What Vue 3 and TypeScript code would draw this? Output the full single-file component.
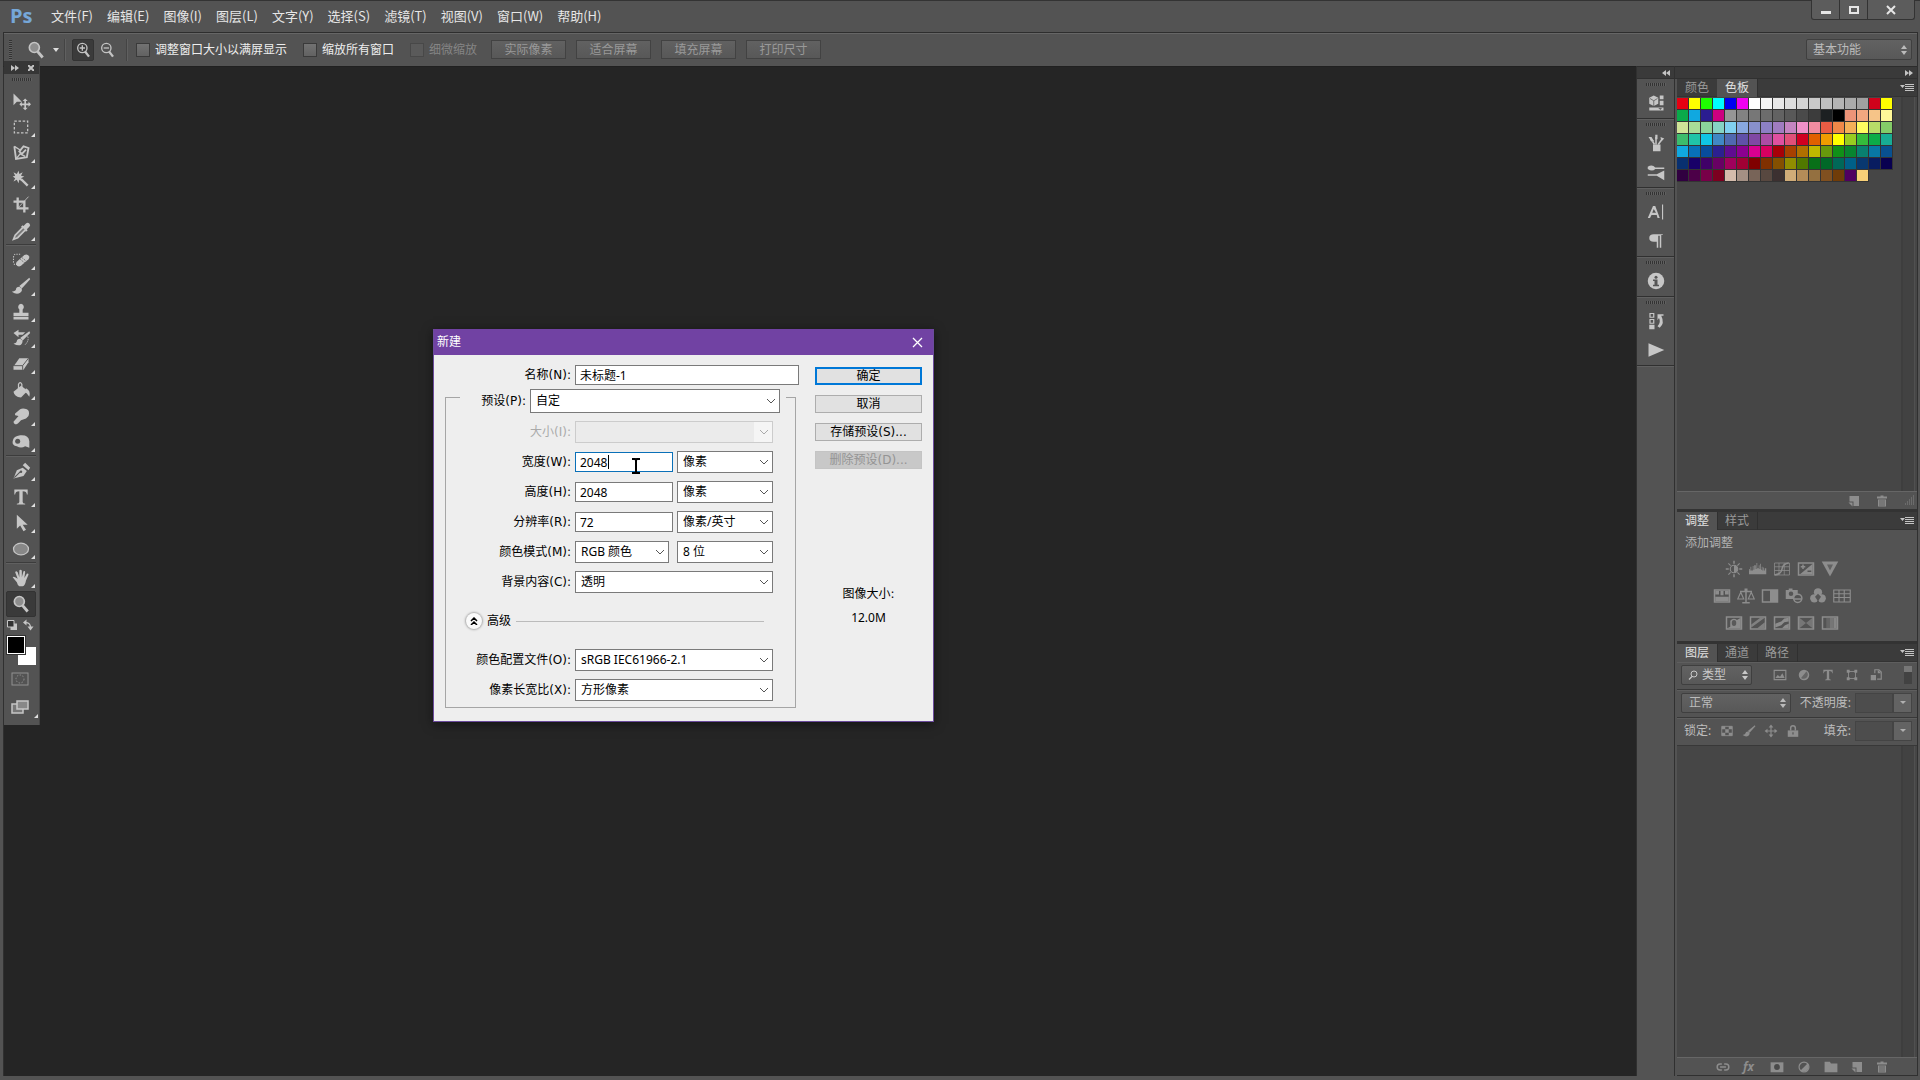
<script setup lang="ts">
import { ref } from 'vue'

const menus = ['文件(F)', '编辑(E)', '图像(I)', '图层(L)', '文字(Y)', '选择(S)', '滤镜(T)', '视图(V)', '窗口(W)', '帮助(H)']

const zoomChecks = [
  { id: 'fit-window', label: '调整窗口大小以满屏显示', disabled: false },
  { id: 'zoom-all', label: '缩放所有窗口', disabled: false },
  { id: 'scrubby', label: '细微缩放', disabled: true },
]
const zoomButtons = ['实际像素', '适合屏幕', '填充屏幕', '打印尺寸']

// Icon bodies, all drawn on a 24 x 24 grid
const icons: Record<string, string> = {
  move: '<path d="M3 3v14l4-4h6z"/><path d="M17 9l-3 3h2v3h-3v-2l-3 3 3 3v-2h3v3h-2l3 3 3-3h-2v-3h3v2l3-3-3-3v2h-3v-3h2z"/>',
  marquee: '<rect x="4" y="5" width="16" height="14" fill="none" stroke="currentColor" stroke-width="1.5" stroke-dasharray="3 2"/>',
  lasso: '<path d="M4 4l2 15 13-2 2-11-6-2-5 6 3 3 5-5" fill="none" stroke="currentColor" stroke-width="2.2"/><path d="M4 4l8 5M6 19l5-6 6 3" fill="none" stroke="currentColor" stroke-width="1.6"/>',
  wand: '<path d="M9 2l1 4 4-2-2 4 4 1-4 2 2 4-4-2-1 4-2-4-4 2 2-4-3-2 3-1-2-4 4 2z"/><path d="M12 12l8 8" stroke="currentColor" stroke-width="2.8"/>',
  crop: '<path d="M8 3v13h13M3 8h13v13" fill="none" stroke="currentColor" stroke-width="2.8"/><path d="M8 16L21 2" stroke="currentColor"/>',
  dropper: '<path d="M12 7l2-2 1 1 3-3q2-2 4 0t0 4l-3 3 1 1-2 2z"/><path d="M14 8l-9 9-2 5 5-2 9-9" fill="#777" stroke="currentColor" stroke-width="2"/>',
  heal: '<path d="M7 14L16 6q4-2 6 2 0 2-1 3l-9 8q-4 2-6-2 0-2 1-3z"/><path d="M11 11l6 5M13 9l6 5" stroke="#666" stroke-width="1" stroke-dasharray="2 1"/><path d="M11 5H5q-2 1-2 4v6l2 4" fill="none" stroke="currentColor" stroke-width="1.3" stroke-dasharray="1.5 1.5"/>',
  brush: '<path d="M22 2L10 12l3 3L23 4z"/><path d="M10 13q-4 0-4 3 0 2-5 3 6 4 10 1 3-2 2-5z"/>',
  stamp: '<path d="M12 2a4 4 0 0 1 2 7v4h7v4H3v-4h7V9a4 4 0 0 1 2-7zM3 18h18v3H3z"/>',
  historybrush: '<path d="M22 4L11 12l3 3L23 6z"/><path d="M11 13q-4 0-4 3 0 2-4 3 6 3 9 1 2-2 2-5z"/><path d="M17 5H9V2L3 6l6 5V8h5z"/><path d="M20 10q2 5-3 10" fill="none" stroke="currentColor" stroke-dasharray="2 1"/>',
  eraser: '<path d="M3 15l7-10h11v5l-6 9H3z"/><path d="M3 14h11l7-9M14 14v5" fill="none" stroke="#5c5c5c" stroke-width="1.2"/>',
  bucket: '<path d="M12 7l8 6-8 8q-8-1-9-7z"/><path d="M9 11V5q2-4 4 0v6" fill="none" stroke="currentColor" stroke-width="1.5"/><path d="M18 10q6 3 4 10-3-5-6-6z"/>',
  smudge: '<path d="M3 19l6-7-4-1q-1-2 1-3l5-4q3-2 8 0 4 2 2 8l-3 3-6 2q-4 5-7 5-2-1-2-3z"/>',
  dodge: '<path d="M2 11q1-6 9-7 10-1 11 7v8l-5-2q-5 3-10 0-6-1-5-6z"/><circle cx="8" cy="11" r="3" fill="#555"/>',
  pen: '<path d="M3 21l4-10 7-3 5 4-4 6z"/><path d="M4 20l7-7" stroke="#555" stroke-width="1.3"/><circle cx="12" cy="13" r="1.5" fill="#555"/><path d="M14 5l3-3 6 6-2 3z"/>',
  type: '<path d="M4 3h16v6h-1q0-4-5-4v13q0 2 3 2v1H7v-1q3 0 3-2V5Q5 5 5 9H4z"/>',
  arrow: '<path d="M7 2v17l4-4 4 7 3-2-4-6h6z"/>',
  ellipse: '<ellipse cx="12" cy="12" rx="9" ry="7" fill="#888" stroke="currentColor" stroke-width="1.5"/>',
  hand: '<path d="M7 17L2 11q1-1 3 0l3 2-3-8q1-2 3 0l2 6V3q1-2 3 0v8l2-7q2-1 2 1l-1 7 3-5q2-1 2 1l-3 7q-1 6-4 7H10q-2-1-3-5z"/>',
  zoom: '<circle cx="10" cy="9" r="6" fill="#8e8e8e" stroke="currentColor" stroke-width="2"/><path d="M14 14l6 7" stroke="currentColor" stroke-width="3.5"/>',
  zoomin: '<circle cx="11" cy="9" r="7" fill="none" stroke="currentColor" stroke-width="2"/><path d="M15 14l6 8" stroke="currentColor" stroke-width="3.5"/><path d="M7 9h8M11 5v8" stroke="currentColor" stroke-width="2"/>',
  zoomout: '<circle cx="11" cy="9" r="7" fill="none" stroke="currentColor" stroke-width="2"/><path d="M15 14l6 8" stroke="currentColor" stroke-width="3.5"/><path d="M7 9h8" stroke="currentColor" stroke-width="2"/>',
  quickmask: '<rect x="4" y="6" width="16" height="12" fill="none" stroke="#919191"/><circle cx="12" cy="12" r="4" fill="none" stroke="#919191" stroke-dasharray="1.5 1.5"/>',
  screen: '<rect x="4" y="9" width="11" height="9" fill="#777" stroke="currentColor" stroke-width="1.5"/><rect x="9" y="6" width="11" height="8" fill="#888" stroke="currentColor" stroke-width="1.5"/>',
  properties: '<path d="M9 2l6 3v8l-6 3-6-3V5z"/><path d="M4 6l5 3 5-3M9 9v7" fill="none" stroke="#555"/><path d="M17 2h5v5h-5zM17 9h5v6h-5zM3 18h19v4H3z"/><path d="M15 19h5l-2 2z" fill="#444"/>',
  brushes: '<path d="M8 14h10v9H8z"/><path d="M10 14L5 6M12 14V4M15 14l5-7M9 10L5 8" stroke="currentColor" stroke-width="2"/><path d="M2 4h4l3 5-3 1zM11 1h3v6h-3zM18 4l5 2-4 4z"/>',
  presets: '<path d="M1 5q6-4 10 1h12v2H11q-4 4-10 0zM1 15h12l10-5v13l-10-6H1z"/>',
  character: '<path d="M8 4h3l6 16h-3l-1-4H6l-2 4H1zm1 4l-2 5h5z"/><path d="M20 2h1.500v20H20z"/>',
  paragraph: '<path d="M9 3h12v1h-2v17h-2V5h-2v16h-2v-8H9q-6 0-6-5t6-5z"/>',
  info: '<circle cx="12" cy="12" r="11"/><path d="M10 10h4v7h2v2H8v-2h2v-5H8v-2z" fill="#555"/><circle cx="12" cy="7" r="2" fill="#555"/>',
  history: '<path d="M4 2h5v5H4zM4 10h5v5H4z" fill="none" stroke="currentColor" stroke-width="1.6"/><path d="M3 17h7v6H3zM14 3h8v2h-3q5 10-2 16l-3-2q5-5 2-11l-2 3z"/>',
  play: '<path d="M2 3l21 9-21 9z"/>',
  brightness: '<circle cx="12" cy="12" r="5" fill="none" stroke="currentColor" stroke-width="1.5"/><path d="M12 7v10a5 5 0 0 0 0-10zM11 1h2v4h-2zM11 19h2v4h-2zM1 11h4v2H1zM19 11h4v2h-4zM4 5l1-1 3 3-1 1zM16 17l1-1 3 3-1 1zM4 19l3-3 1 1-3 3zM16 7l3-3 1 1-3 3z"/>',
  levels: '<path d="M0 19v-7h1v2h1V9h1v5h2V8h1v5h1V7h2v5h1V4h1v7h2V7h1v5h1V5h1v8h1V9h1v5h1v-4h1v4h1v-3h2v8z"/>',
  curves: '<path d="M2 4h20v16H2zM2 9h20M2 14h20M8 4v16M15 4v16" fill="none" stroke="currentColor"/><path d="M2 20Q11 19 12 12t9-8" fill="none" stroke="currentColor" stroke-width="2"/>',
  exposure: '<path d="M2 4h20v16H2z" fill="none" stroke="currentColor" stroke-width="2"/><path d="M21 5v14H4zM5 8h6v2H5zM7 6h2v6H7z"/><path d="M14 15h5" stroke="#535353" stroke-width="2"/>',
  vibrance: '<path d="M1 2h22L12 22z"/><path d="M8 6h8l-4 8z" fill="#626262"/>',
  hue: '<path d="M2 4h20v16H2z" fill="none" stroke="currentColor" stroke-width="2"/><path d="M3 5h5v5H3zM10 5h4v6h-4zM16 5h5v5h-5zM3 13h18v6H3z"/>',
  balance: '<path d="M4 5h6V2h4v3h6v2h-7v13h4v2H7v-2h4V7H4z"/><path d="M5 7L1 16h8zM19 7l-4 9h8z" fill="none" stroke="currentColor" stroke-width="1.5"/>',
  bw: '<path d="M2 4h20v16H2z" fill="none" stroke="currentColor" stroke-width="2"/><path d="M12 4h10v16H12z"/>',
  photo: '<path d="M1 4h4V2h5v2h7v6a6 6 0 0 0-6 6H1z"/><circle cx="8" cy="9" r="3" fill="#555"/><circle cx="17" cy="15" r="5.5" fill="none" stroke="currentColor" stroke-width="2"/><path d="M12 15h10v2H12z"/>',
  mixer: '<circle cx="12" cy="7" r="5.5"/><circle cx="7" cy="15" r="5.5"/><circle cx="17" cy="15" r="5.5"/><path d="M12 9l4 4-4 6-4-6z" fill="#555"/>',
  lookup: '<path d="M1 4h22v16H1zM1 9h22M1 14h22M8 4v16M15 4v16" fill="none" stroke="currentColor" stroke-width="1.5"/>',
  invert: '<path d="M2 4h20v16H2z" fill="none" stroke="currentColor" stroke-width="2"/><path d="M3 19l4-2V9q4-5 9-1l5-3v14z"/><ellipse cx="12" cy="12" rx="3" ry="4" fill="#5a5a5a"/>',
  posterize: '<path d="M2 4h20v16H2z" fill="none" stroke="currentColor" stroke-width="2"/><path d="M3 14L15 5h6L3 18zM11 19l10-8v8z" opacity=".8"/>',
  threshold: '<path d="M2 4h20v16H2z" fill="none" stroke="currentColor" stroke-width="2"/><path d="M3 13l5-2 3-1 4-4 6-1v5l-6 1-4 4-8 3z"/><path d="M12 19l4-4 5-2v6z"/>',
  selective: '<path d="M2 4h20v16H2z" fill="none" stroke="currentColor" stroke-width="2"/><path d="M2 4l10 8L22 4v16l-10-8-10 8z" opacity=".6"/>',
  gradient: '<path d="M2 4h20v16H2z" fill="none" stroke="currentColor" stroke-width="2"/><path d="M7 5h5v14H7z" opacity=".3"/><path d="M12 5h5v14h-5z" opacity=".6"/><path d="M17 5h4v14h-4z" opacity=".9"/>',
  image: '<path d="M2 4h20v16H2z" fill="none" stroke="currentColor" stroke-width="2"/><path d="M4 17l4-5 4 3 4-6 4 8z"/>',
  adjust: '<circle cx="12" cy="12" r="8.5" fill="none" stroke="currentColor" stroke-width="2"/><path d="M18 6a8.500 8.500 0 0 1-12 12z"/>',
  adjustf: '<circle cx="12" cy="12" r="9"/><path d="M16 6a7 7 0 0 1-9 11z" fill="#666"/>',
  shape: '<path d="M6 6h12v12H6z" fill="none" stroke="currentColor" stroke-width="1.5"/><path d="M3 3h5v5H3zM16 3h5v5h-5zM3 16h5v5H3zM16 16h5v5h-5z"/>',
  smart: '<path d="M10 9V3h7l4 4v12h-7" fill="none" stroke="currentColor" stroke-width="2"/><path d="M15 3v6h6M3 12h9v9H3z"/>',
  checker: '<path d="M3 4h18v16H3z" fill="none" stroke="currentColor" stroke-width="1.5"/><path d="M3 4h6v5H3zM15 4h6v5h-6zM9 9h6v6H9zM3 15h6v5H3zM15 15h6v5h-6z"/>',
  cross: '<path d="M12 1l4 5h-3v5h5V8l5 4-5 4v-3h-5v5h3l-4 5-4-5h3v-5H6v3l-5-4 5-4v3h5V6H8z"/>',
  lock: '<path d="M3 11h18v11H3z"/><path d="M8 11V7q0-4 4-4t4 4v4" fill="none" stroke="currentColor" stroke-width="2.5"/><path d="M11 14h2v4h-2z" fill="#555"/>',
  link: '<path d="M10 17H7a5 5 0 0 1 0-10h3M14 7h3a5 5 0 0 1 0 10h-3M7 12h10" fill="none" stroke="currentColor" stroke-width="2.5"/>',
  mask: '<path d="M1 4h22v17H1z"/><circle cx="12" cy="12" r="5" fill="#4a4a4a"/>',
  folder: '<path d="M1 3h9l2 3h11v15H1z"/>',
  newitem: '<path d="M3 2h19v20H11v-9H3z"/><path d="M1 15h8v8z"/>',
  trash: '<path d="M9 1h6v2h7v4H2V3h7zM4 9h16v14H4z"/><path d="M8 10v12M12 10v12M16 10v12" stroke="#535353" stroke-width="1.5"/>',
  search: '<circle cx="14" cy="10" r="6" fill="none" stroke="currentColor" stroke-width="2"/><path d="M10 15l-6 6" stroke="currentColor" stroke-width="2.5"/>',
  reset: '<path d="M9 9h13v13H9z"/><path d="M3 3h13v13H3z" fill="#333" stroke="currentColor" stroke-width="2"/>',
  swap: '<path d="M7 7q10 0 10 10" fill="none" stroke="currentColor" stroke-width="2.5"/><path d="M9 1v12L2 7zM11 15h12l-6 8z"/>',
}

interface Tool { icon: string; name: string; corner: boolean }
const tool = (icon: string, name: string, corner = true): Tool => ({ icon, name, corner })
const toolGroups: Tool[][] = [
  [tool('move', '移动', false), tool('marquee', '选框'), tool('lasso', '套索'), tool('wand', '魔棒'), tool('crop', '裁剪'), tool('dropper', '吸管')],
  [tool('heal', '修复'), tool('brush', '画笔'), tool('stamp', '图章'), tool('historybrush', '历史画笔'), tool('eraser', '橡皮擦'), tool('bucket', '油漆桶'), tool('smudge', '涂抹'), tool('dodge', '海绵')],
  [tool('pen', '钢笔'), tool('type', '文字'), tool('arrow', '路径选择'), tool('ellipse', '椭圆')],
  [tool('hand', '抓手'), tool('zoom', '缩放', false)],
]
const activeTool = ref('zoom')

const dockGroups = [['properties'], ['brushes', 'presets'], ['character', 'paragraph'], ['info'], ['history', 'play']]

const swatches = [
  'e60012 ffff00 1eff00 00ffff 0000f0 f000f0 ffffff f4f4f4 e8e8e8 dddddd d3d3d3 c9c9c9 bfbfbf b5b5b5 ababab a0a0a0 d0021b ffff00',
  '0aaa4a 10a8e0 2a1c90 cc0080 969696 828282 777777 6c6c6c 626262 585858 4a4a4a 3c3c3c 1c2022 000000 ec9478 f2a880 f6c488 fff898',
  'd0e498 a8dc98 8ad49c 86d4c4 80d0f0 88a8e0 8890cc 8c80c4 a07cc0 c484c0 f090c8 f08ca0 e85c44 f08848 f4b058 fffc60 b8dc68 84cc68',
  '3cbc6c 20c4a8 10c4e4 4088c4 5068b0 6050a8 8048a4 ac4ca4 e050a0 e05078 d00020 e06000 f09c00 ffff00 98cc20 34bc3c 0cac48 18ac94',
  '10a8e0 0870b8 084c9c 2c2090 600c90 8c0090 d80090 d80060 a80008 a84000 b07000 c0b800 68980c 109018 088430 088070 0878a4 085090',
  '083070 180068 400068 680064 a0005c a00034 800000 803000 845000 908c00 507800 087018 006828 006858 006088 083870 081c60 080050',
  '300040 4c0048 780048 7c0020 d4bcac a49084 786458 584840 3c3030 d0ac78 b48c58 947040 805020 703c08 500060 f8d078',
].map((row) => row.split(' '))

const adjustments = [
  ['brightness', 'levels', 'curves', 'exposure', 'vibrance'],
  ['hue', 'balance', 'bw', 'photo', 'mixer', 'lookup'],
  ['invert', 'posterize', 'threshold', 'selective', 'gradient'],
]
const filterIcons = ['image', 'adjustf', 'type', 'shape', 'smart']
const lockIcons = ['checker', 'brush', 'cross', 'lock']

const form = ref({ name: '未标题-1', width: '2048', height: '2048', resolution: '72' })
const sizeRows = [
  { key: 'width' as const, label: '宽度(W):', unit: '像素' },
  { key: 'height' as const, label: '高度(H):', unit: '像素' },
  { key: 'resolution' as const, label: '分辨率(R):', unit: '像素/英寸' },
]
const profileRows = [
  { id: 'profile', label: '颜色配置文件(O):', value: 'sRGB IEC61966-2.1' },
  { id: 'ratio', label: '像素长宽比(X):', value: '方形像素' },
]
</script>

<template>
  <div class="app">
    <header class="menubar">
      <span class="logo">Ps</span>
      <nav class="menus">
        <a v-for="m in menus" :key="m" href="#">{{ m }}</a>
      </nav>
      <div class="winbtns">
        <button aria-label="最小化"><svg width="12" height="12"><path d="M1 7h10v3H1z" fill="#e6e6e6" /></svg></button>
        <button aria-label="最大化"><svg width="12" height="12"><path d="M2 3h8v6H2z" fill="none" stroke="#e6e6e6" stroke-width="2" /></svg></button>
        <button class="wide" aria-label="关闭"><svg width="12" height="12"><path d="M2 2l8 8M10 2l-8 8" stroke="#e6e6e6" stroke-width="2" /></svg></button>
      </div>
    </header>

    <div class="options">
      <i class="vgrip"></i>
      <button class="current" aria-label="缩放工具">
        <svg class="ic20" viewBox="0 0 24 24" v-html="icons.zoom"></svg>
        <svg width="6" height="4"><path d="M0 0h6l-3 4z" fill="#ddd" /></svg>
      </button>
      <i class="vline"></i>
      <button class="zbtn pressed" aria-label="放大"><svg class="ic16" viewBox="0 0 24 24" v-html="icons.zoomin"></svg></button>
      <button class="zbtn" aria-label="缩小"><svg class="ic16" viewBox="0 0 24 24" v-html="icons.zoomout"></svg></button>
      <i class="vline second"></i>
      <label v-for="c in zoomChecks" :key="c.id" class="check" :class="{ off: c.disabled }" :for="c.id">
        <input :id="c.id" type="checkbox" :disabled="c.disabled" />{{ c.label }}
      </label>
      <div class="zoombtns">
        <button v-for="b in zoomButtons" :key="b" disabled>{{ b }}</button>
      </div>
      <label class="pselect workspace-select">
        <select aria-label="工作区"><option>基本功能</option></select>
        <svg width="6" height="10"><path d="M0 4l3-4 3 4zM0 6h6l-3 4z" /></svg>
      </label>
    </div>

    <main class="work">
      <section class="canvas">
        <aside class="toolbox">
          <div class="toolhead">
            <svg width="8" height="6"><path d="M0 0l4 3-4 3zM4 0l4 3-4 3z" fill="#c4c4c4" /></svg>
            <svg width="6" height="6"><path d="M0 0l6 6M6 0L0 6" stroke="#c4c4c4" stroke-width="2" /></svg>
          </div>
          <i class="hgrip"></i>
          <div v-for="(g, i) in toolGroups" :key="i" class="toolgroup">
            <button v-for="t in g" :key="t.icon" :class="{ active: t.icon === activeTool }" :aria-label="t.name" @click="activeTool = t.icon">
              <svg class="ic20" viewBox="0 0 24 24" v-html="icons[t.icon]"></svg>
              <i v-if="t.corner" class="corner"></i>
            </button>
          </div>
          <div class="mini">
            <svg class="ic12" viewBox="0 0 24 24" v-html="icons.reset"></svg>
            <svg class="ic12" viewBox="0 0 24 24" v-html="icons.swap"></svg>
          </div>
          <div class="colors"><i class="bg"></i><i class="fg"></i></div>
          <button class="mode" aria-label="快速蒙版"><svg class="ic24" viewBox="0 0 24 24" v-html="icons.quickmask"></svg></button>
          <button class="mode" aria-label="屏幕模式"><svg class="ic24" viewBox="0 0 24 24" v-html="icons.screen"></svg><i class="corner"></i></button>
        </aside>

        <form class="dialog" role="dialog" aria-label="新建" @submit.prevent>
          <div class="title">
            <span>新建</span>
            <button type="button" aria-label="关闭"><svg width="11" height="11"><path d="M1 1l9 9M10 1l-9 9" stroke="#fff" stroke-width="1.3" /></svg></button>
          </div>
          <div class="dbody">
            <div class="fields">
              <div class="row name">
                <label for="doc-name">名称(N):</label>
                <input id="doc-name" v-model="form.name" class="box" type="text" />
              </div>
              <fieldset>
                <legend>
                  <label for="preset">预设(P):</label>
                  <span class="dsel tall">
                    <select id="preset"><option>自定</option></select>
                    <svg width="10" height="6"><path d="M1 1l4 4 4-4" /></svg>
                  </span>
                </legend>
                <div class="row dim">
                  <label for="size">大小(I):</label>
                  <span class="dsel">
                    <select id="size" disabled></select>
                    <svg width="10" height="6"><path d="M1 1l4 4 4-4" /></svg>
                  </span>
                </div>
                <div v-for="r in sizeRows" :key="r.key" class="row">
                  <label :for="r.key">{{ r.label }}</label>
                  <span class="num">
                    <input :id="r.key" v-model="form[r.key]" class="box" :class="{ focus: r.key === 'width' }" type="text" />
                    <template v-if="r.key === 'width'">
                      <i class="caret"></i>
                      <svg class="ibeam" width="12" height="18"><path d="M2 2h3l1 1 1-1h3M6 3v12M2 16h3l1-1 1 1h3" fill="none" stroke="#000" stroke-width="2" /></svg>
                    </template>
                  </span>
                  <span class="dsel unit">
                    <select :aria-label="r.label"><option>{{ r.unit }}</option></select>
                    <svg width="10" height="6"><path d="M1 1l4 4 4-4" /></svg>
                  </span>
                </div>
                <div class="row">
                  <label for="mode">颜色模式(M):</label>
                  <span class="dsel cmode">
                    <select id="mode"><option>RGB 颜色</option></select>
                    <svg width="10" height="6"><path d="M1 1l4 4 4-4" /></svg>
                  </span>
                  <span class="dsel unit">
                    <select aria-label="位深"><option>8 位</option></select>
                    <svg width="10" height="6"><path d="M1 1l4 4 4-4" /></svg>
                  </span>
                </div>
                <div class="row">
                  <label for="content">背景内容(C):</label>
                  <span class="dsel">
                    <select id="content"><option>透明</option></select>
                    <svg width="10" height="6"><path d="M1 1l4 4 4-4" /></svg>
                  </span>
                </div>
                <div class="advanced">
                  <button type="button" aria-label="收起"><svg width="8" height="8"><path d="M1 4l3-3 3 3M1 8l3-3 3 3" fill="none" stroke="#000" stroke-width="1.5" /></svg></button>
                  <span>高级</span>
                  <hr />
                </div>
                <div v-for="r in profileRows" :key="r.id" class="row">
                  <label :for="r.id">{{ r.label }}</label>
                  <span class="dsel">
                    <select :id="r.id"><option>{{ r.value }}</option></select>
                    <svg width="10" height="6"><path d="M1 1l4 4 4-4" /></svg>
                  </span>
                </div>
              </fieldset>
            </div>
            <div class="side">
              <button class="primary">确定</button>
              <button type="button">取消</button>
              <button type="button">存储预设(S)...</button>
              <button type="button" disabled>删除预设(D)...</button>
              <div class="imgsize"><span>图像大小:</span><span>12.0M</span></div>
            </div>
          </div>
        </form>
      </section>

      <aside class="icondock">
        <div class="dockhead"><svg width="8" height="6"><path d="M4 0L0 3l4 3zM8 0L4 3l4 3z" fill="#c4c4c4" /></svg></div>
        <div v-for="(g, i) in dockGroups" :key="i" class="dockgroup">
          <i class="hgrip"></i>
          <button v-for="n in g" :key="n" :aria-label="n"><svg class="ic18" viewBox="0 0 24 24" v-html="icons[n]"></svg></button>
        </div>
      </aside>

      <aside class="panels">
        <div class="dockhead"><svg width="8" height="6"><path d="M0 0l4 3-4 3zM4 0l4 3-4 3z" fill="#c4c4c4" /></svg></div>
        <section class="panel swatchpanel">
          <div class="tabs">
            <button>颜色</button><button class="on">色板</button>
            <svg width="14" height="8"><path d="M0 1h5L2.500 4zM5 0h9v1H5zM5 2h9v1H5zM5 4h9v1H5zM5 6h9v1H5z" /></svg>
          </div>
          <div class="well">
            <div class="swatches">
              <div v-for="(r, i) in swatches" :key="i" class="srow">
                <i v-for="(c, j) in r" :key="j" :style="{ background: '#' + c }"></i>
              </div>
            </div>
            <i class="scroll"></i>
          </div>
          <footer class="pfoot wide">
            <svg class="ic12" viewBox="0 0 24 24" v-html="icons.newitem"></svg>
            <svg class="ic12" viewBox="0 0 24 24" v-html="icons.trash"></svg>
            <svg width="11" height="11"><path d="M9 1h1M7 3h3M5 5h5M3 7h7M1 9h9" stroke="#858585" stroke-dasharray="1 1" /></svg>
          </footer>
        </section>

        <section class="panel adjpanel">
          <div class="tabs">
            <button class="on">调整</button><button>样式</button>
            <svg width="14" height="8"><path d="M0 1h5L2.500 4zM5 0h9v1H5zM5 2h9v1H5zM5 4h9v1H5zM5 6h9v1H5z" /></svg>
          </div>
          <div class="adjbody">
            <p>添加调整</p>
            <div v-for="(r, i) in adjustments" :key="i" class="adjrow">
              <button v-for="n in r" :key="n" :aria-label="n"><svg class="ic18" viewBox="0 0 24 24" v-html="icons[n]"></svg></button>
            </div>
          </div>
        </section>

        <section class="panel layers">
          <div class="tabs">
            <button class="on">图层</button><button>通道</button><button>路径</button>
            <svg width="14" height="8"><path d="M0 1h5L2.500 4zM5 0h9v1H5zM5 2h9v1H5zM5 4h9v1H5zM5 6h9v1H5z" /></svg>
          </div>
          <div class="lrow">
            <label class="pselect kind">
              <svg class="ic12 lens" viewBox="0 0 24 24" v-html="icons.search"></svg>
              <select aria-label="类型"><option>类型</option></select>
              <svg width="6" height="10"><path d="M0 4l3-4 3 4zM0 6h6l-3 4z" /></svg>
            </label>
            <div class="filters">
              <svg v-for="n in filterIcons" :key="n" class="ic14" viewBox="0 0 24 24" v-html="icons[n]"></svg>
            </div>
            <i class="toggle"></i>
          </div>
          <div class="lrow">
            <label class="pselect blend">
              <select aria-label="混合模式"><option>正常</option></select>
              <svg width="6" height="10"><path d="M0 4l3-4 3 4zM0 6h6l-3 4z" /></svg>
            </label>
            <label class="amount">不透明度: <input type="text" /><b></b></label>
          </div>
          <div class="lrow">
            <span class="locktext">锁定:</span>
            <div class="locks">
              <svg v-for="n in lockIcons" :key="n" class="ic14" viewBox="0 0 24 24" v-html="icons[n]"></svg>
            </div>
            <label class="amount">填充: <input type="text" /><b></b></label>
          </div>
          <div class="well"><i class="scroll"></i></div>
          <footer class="pfoot">
            <svg class="ic14" viewBox="0 0 24 24" v-html="icons.link"></svg>
            <em>fx</em>
            <svg class="ic14" viewBox="0 0 24 24" v-html="icons.mask"></svg>
            <svg class="ic14" viewBox="0 0 24 24" v-html="icons.adjust"></svg>
            <svg class="ic14" viewBox="0 0 24 24" v-html="icons.folder"></svg>
            <svg class="ic12" viewBox="0 0 24 24" v-html="icons.newitem"></svg>
            <svg class="ic12" viewBox="0 0 24 24" v-html="icons.trash"></svg>
          </footer>
        </section>
      </aside>
    </main>
  </div>
</template>

<style>
body { background: #535353; overflow: hidden; }
</style>

<style scoped>
.app {
  box-sizing: border-box;
  display: flex;
  flex-direction: column;
  height: 100vh;
  padding: 0 2px 4px 3px;
  background: #535353;
  color: #ddd;
  font: 12px/16px "Noto Sans", "Noto Sans CJK SC", sans-serif;
}
.app *, .app *::before { box-sizing: border-box; }
button, select, input { font: inherit; color: inherit; margin: 0; padding: 0; border: 0; background: none; border-radius: 0; outline: 0; }
select, input { appearance: none; }
svg { fill: currentColor; flex: none; display: block; }
i { display: block; flex: none; }
.ic12 { width: 12px; height: 12px; }
.ic14 { width: 14px; height: 14px; }
.ic16 { width: 16px; height: 16px; }
.ic18 { width: 18px; height: 18px; }
.ic20 { width: 20px; height: 20px; }
.ic24 { width: 24px; height: 24px; }

.menubar { display: flex; height: 32px; flex: none; align-items: center; box-shadow: inset 0 1px #333; margin: 0 -2px 0 -3px; }
.logo { width: 51px; padding-left: 10px; font: bold 20px/30px "Open Sans", sans-serif; color: #76a7d8; }
.menus { display: flex; gap: 14px; flex: 1; font: 13px/18px "Noto Sans CJK SC", sans-serif; }
.menus a { color: #e6e6e6; text-decoration: none; }
.winbtns { display: flex; align-self: flex-start; height: 20px; margin-right: 5px; border: 1px solid #333; border-top: 0; border-radius: 0 0 3px 3px; background: #5c5c5c; }
.winbtns button { width: 28px; display: grid; place-items: center; border-right: 1px solid #333; }
.winbtns .wide { width: 46px; border: 0; }

.options { display: flex; align-items: center; height: 34px; flex: none; border: 1px solid #2e2e2e; border-bottom: 0; box-shadow: inset 0 1px #666; padding: 0 5px; }
.vgrip { width: 3px; height: 20px; background: repeating-linear-gradient(#333 0 1px, #616161 1px 2px); }
.current { display: flex; align-items: center; gap: 7px; padding-left: 14px; color: #c4c4c4; }
.vline { width: 2px; height: 22px; margin: 0 6px 0 5px; background: #444; border-right: 1px solid #606060; }
.vline.second { margin: 0 8px 0 6px; }
.zbtn { width: 22px; height: 22px; display: grid; place-items: center; color: #c4c4c4; margin-right: 2px; }
.pressed { background: #3b3b3b; border: 1px solid #333; border-radius: 2px; }
.check { display: flex; align-items: center; gap: 5px; margin-right: 16px; white-space: nowrap; color: #eee; }
.check input { width: 14px; height: 14px; border: 1px solid #3a3a3a; background: linear-gradient(#727272, #626262); }
.check.off { color: #858585; }
.check.off input { border-color: #484848; background: #5a5a5a; }
.zoombtns { display: flex; gap: 10px; margin-left: -2px; }
.zoombtns button { width: 75px; height: 19px; border: 1px solid #424242; background: linear-gradient(#616161, #585858); color: #999; line-height: 16px; }
.pselect { display: grid; grid-template-columns: 1fr auto; align-items: center; height: 20px; padding: 0 4px 0 7px; border: 1px solid #3f3f3f; border-radius: 2px; background: linear-gradient(#626262, #585858); color: #bbb; }
.pselect select { width: 100%; height: 18px; }
.workspace-select { width: 106px; height: 21px; margin-left: auto; padding-left: 6px; }

.work { display: flex; flex: 1; min-height: 0; }
.canvas { position: relative; flex: 1; min-width: 0; background: #252525; border-left: 1px solid #303030; border-top: 1px solid #202020; }
.toolbox { position: absolute; top: -6px; left: 0; width: 36px; height: 664px; background: #535353; border-right: 1px solid #444; color: #c6c6c6; display: flex; flex-direction: column; }
.toolhead { display: flex; justify-content: space-between; align-items: center; height: 13px; flex: none; padding: 0 5px 0 7px; background: #363636; }
.hgrip { width: 20px; height: 3px; background: repeating-linear-gradient(90deg, #333 0 1px, #606060 1px 2px); }
.toolbox .hgrip { margin: 4px auto 7px; }
.toolgroup { margin: 0 3px 2px 2px; border-bottom: 1px solid #3c3c3c; box-shadow: 0 1px #606060; }
.toolgroup:nth-last-of-type(3) { border: 0; box-shadow: none; margin-bottom: 0; }
.toolgroup button, .mode { position: relative; display: grid; place-items: center; width: 100%; height: 26px; }
.toolgroup .active { background: #3a3a3a; border: 1px solid #333; border-radius: 2px; }
.corner { position: absolute; right: 1px; bottom: 3px; width: 4px; height: 4px; background: #e0e0e0; clip-path: polygon(100% 0, 100% 100%, 0 100%); }
.mini { display: flex; justify-content: space-between; padding: 2px 5px 5px 2px; }
.colors { position: relative; width: 29px; height: 29px; margin-left: 3px; flex: none; }
.colors i { position: absolute; width: 18px; height: 18px; }
.colors .fg { left: 0; top: 0; background: #000; border: 1px solid #fff; outline: 1px solid #333; }
.colors .bg { right: 0; bottom: 0; background: #fff; }
.mode { height: 28px; flex: none; padding-right: 4px; }

.icondock { width: 39px; flex: none; border-left: 1px solid #303030; border-right: 1px solid #303030; }
.dockhead { display: flex; justify-content: flex-end; align-items: center; height: 13px; padding-right: 4px; background: #3a3a3a; border-top: 1px solid #2c2c2c; border-bottom: 1px solid #303030; }
.dockgroup { display: flex; flex-direction: column; align-items: center; padding: 4px 0 1px; border-bottom: 1px solid #303030; box-shadow: 0 1px #606060; color: #c6c6c6; }
.dockgroup .hgrip { margin-bottom: 2px; }
.dockgroup button { width: 100%; height: 29px; display: grid; place-items: center; }

.panels { width: 243px; flex: none; display: flex; flex-direction: column; padding-left: 2px; border-right: 1px solid #303030; }
.panels .dockhead { margin-left: -2px; flex: none; }
.panel { display: flex; flex-direction: column; border-bottom: 3px solid #333; flex: none; }
.tabs { display: flex; height: 18px; flex: none; background: #3b3b3b; border-bottom: 1px solid #333; color: #999; padding-right: 3px; }
.tabs button { padding: 0 8px; height: 18px; border-right: 1px solid #303030; margin-right: -1px; }
.tabs .on { background: #535353; color: #e2e2e2; }
.tabs svg { margin: 5px 0 0 auto; color: #c4c4c4; }
.swatchpanel { height: 433px; }
.well { display: flex; flex: 1; min-height: 0; background: #464646; }
.scroll { width: 14px; margin: 0 2px 0 auto; background: #424242; border-left: 2px solid #3e3e3e; border-right: 1px solid #505050; }
.swatches { padding-top: 1px; }
.srow { display: flex; }
.srow i { width: 12px; height: 12px; border: solid #333; border-width: 0 1px 1px 0; }
.pfoot { display: flex; align-items: center; justify-content: flex-end; gap: 13px; height: 18px; flex: none; padding-right: 29px; background: #535353; border-top: 1px solid #666; color: #8d8d8d; }
.pfoot.wide { gap: 16px; padding-right: 2px; }
.pfoot em { width: 14px; font: italic bold 12px/14px "Open Sans", sans-serif; }
.adjpanel { height: 132px; }
.adjbody { padding-left: 8px; color: #8d8d8d; }
.adjbody p { margin: 0; line-height: 25px; color: #b2b2b2; }
.adjrow { display: flex; height: 27px; padding-left: 25px; color: #8d8d8d; }
.adjrow:nth-of-type(odd) { padding-left: 37px; }
.adjrow button { width: 24px; display: grid; place-items: center; }
.layers { flex: 1; min-height: 0; border-bottom: 1px solid #303030; }
.lrow { display: flex; align-items: center; justify-content: space-between; height: 28px; flex: none; padding: 0 5px 2px 4px; border-bottom: 1px solid #383838; box-shadow: inset 0 1px #5e5e5e; color: #bdbdbd; }
.kind { width: 71px; grid-template-columns: 14px 1fr auto; padding: 0 3px 0 5px; color: #c8c8c8; gap: 1px; }
.filters { display: flex; gap: 10px; color: #8d8d8d; }
.toggle { width: 8px; height: 18px; background: linear-gradient(#777 0 6px, #424242 6px); }
.blend { width: 110px; }
.amount { display: flex; align-items: center; white-space: nowrap; }
.amount input { width: 38px; height: 20px; margin-left: 4px; border: 1px solid #444; background: #4d4d4d; }
.amount b { display: grid; place-items: center; width: 19px; height: 20px; border: 1px solid #444; background: #636363; }
.amount b::before { content: ""; border: 3px solid transparent; border-top-color: #b0b0b0; border-bottom: 0; }
.locktext { padding-left: 3px; }
.locks { display: flex; gap: 8px; color: #8d8d8d; margin-right: 16px; }

.dialog { position: absolute; left: 429px; top: 262px; width: 501px; border: 1px solid #6b4b9c; background: #eee; color: #000; box-shadow: 0 2px 10px rgba(0, 0, 0, .5); }
.title { display: flex; justify-content: space-between; align-items: center; height: 26px; padding: 0 10px 0 3px; margin-top: -1px; background: #7142a3; color: #fff; }
.dbody { display: flex; justify-content: space-between; padding: 10px 11px 13px 11px; }
.fields { width: 351px; }
.row { display: grid; grid-template-columns: 125px 1fr; column-gap: 4px; align-items: center; height: 22px; margin-bottom: 8px; }
.row:has(.unit) { grid-template-columns: 125px 98px 96px; }
.row label, legend label, .side button, .imgsize span:first-child { font-family: "DejaVu Sans", "Noto Sans CJK SC", sans-serif; }
.row label { text-align: right; white-space: nowrap; }
.row.name { grid-template-columns: 126px 224px; height: 20px; margin-bottom: 4px; }
.row.dim { color: #aaa; }
.box { width: 100%; height: 20px; padding: 0 4px; background: #fff; border: 1px solid #7a7a7a; }
.box.focus { border-color: #0a70b8; }
fieldset { margin: 0; padding: 16px 22px 6px 0; border: 1px solid #a5a5a5; min-width: 0; }
fieldset > .row:last-child { margin-bottom: 0; }
legend { display: flex; align-items: center; justify-content: flex-end; gap: 4px; width: 326px; height: 16px; margin-left: 14px; padding: 8px 6px 0 0; }
.dsel { display: grid; grid-template-columns: 1fr 20px; align-items: center; height: 22px; background: #fff; border: 1px solid #7a7a7a; }
.dsel.tall { width: 250px; height: 24px; flex: none; }
.dsel select { grid-area: 1 / 1 / 2 / 3; width: 100%; height: 20px; padding-left: 5px; }
.dsel svg { grid-area: 1 / 2; fill: none; stroke: #555; margin-left: 7px; }
.cmode { width: 94px; }
.dim .dsel { border-color: #ccc; background: linear-gradient(90deg, #ebebeb 0 178px, #f5f5f5 178px); }
.dim .dsel svg { stroke: #aaa; }
.num { position: relative; display: block; }
.num .box { display: block; }
.caret { position: absolute; left: 33px; top: 3px; width: 1px; height: 14px; background: #000; }
.ibeam { position: absolute; left: 55px; top: 5px; }
.advanced { display: flex; align-items: center; height: 40px; margin-bottom: 8px; padding-left: 20px; }
.advanced button { display: grid; place-items: center; width: 16px; height: 16px; border-radius: 50%; background: #fafafa; box-shadow: 0 0 2px 1px #aaa; }
.advanced span { margin: 0 5px 0 5px; }
.advanced hr { flex: 1; margin: 0 9px 0 0; border: 0; border-top: 1px solid #bbb; }
.side { display: flex; flex-direction: column; gap: 10px; width: 107px; padding-top: 2px; }
.side button { height: 18px; line-height: 16px; border: 1px solid #adadad; background: #e1e1e1; white-space: nowrap; }
.side .primary { border: 2px solid #0078d7; line-height: 14px; }
.side button:disabled { background: #c8c8c8; border-color: #c4c4c4; color: #949494; }
.imgsize { display: flex; flex-direction: column; align-items: center; gap: 8px; margin-top: 107px; }
</style>
